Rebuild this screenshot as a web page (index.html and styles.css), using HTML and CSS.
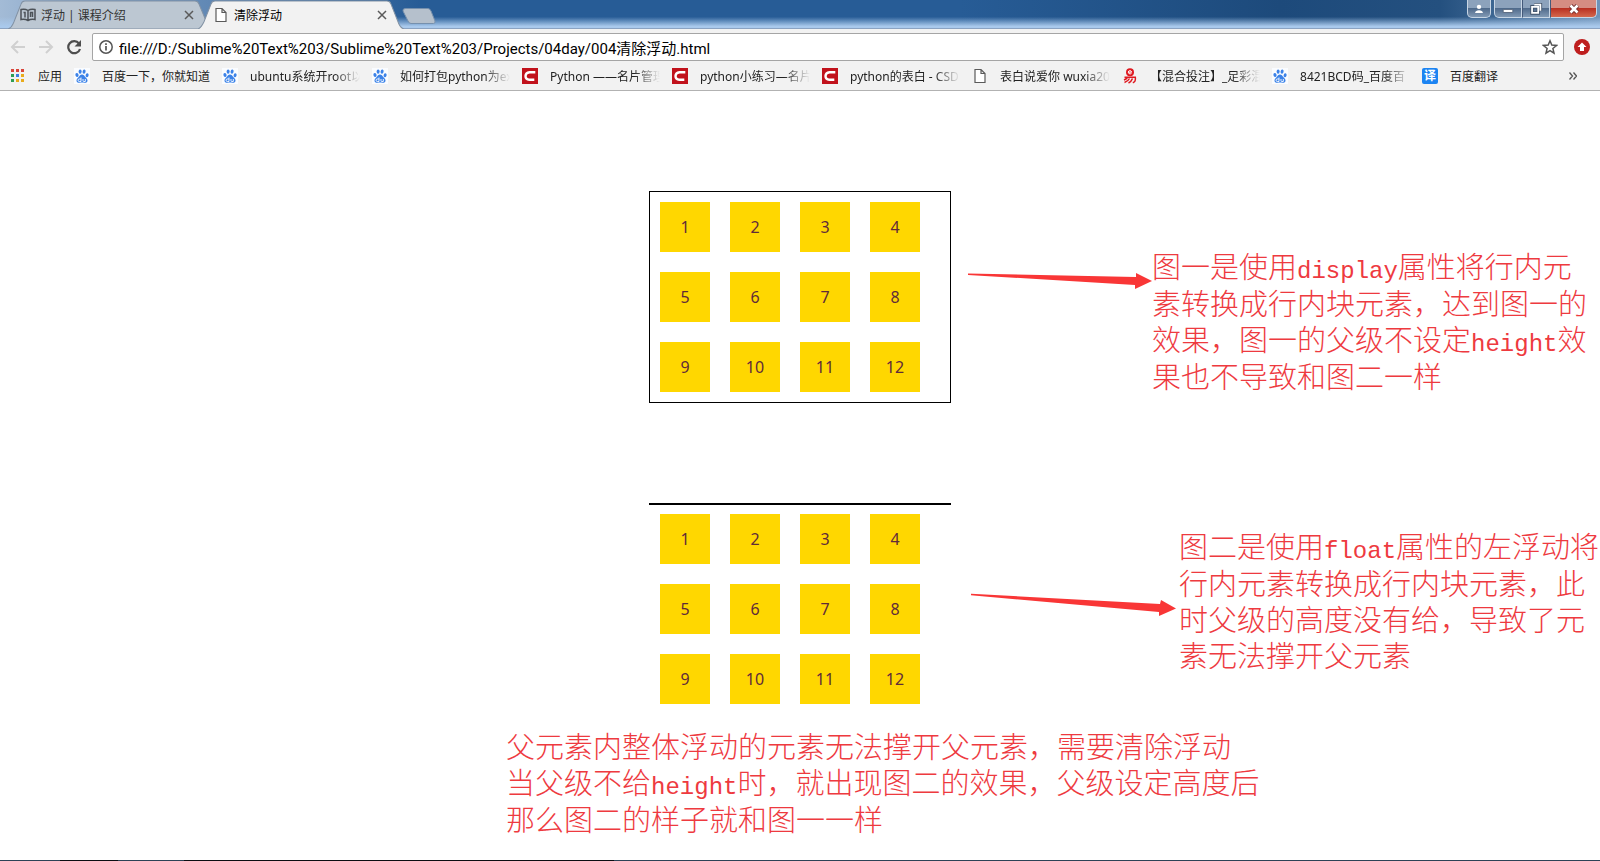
FILE: index.html
```
<!DOCTYPE html>
<html lang="zh-CN">
<head>
<meta charset="utf-8">
<title>清除浮动</title>
<link rel="stylesheet" href="styles.css">
</head>
<body>
<svg class="defs" aria-hidden="true">
  <symbol id="paw" viewBox="0 0 16 16">
    <rect width="16" height="16" fill="#fafcff"/>
    <g fill="#3b82e8">
      <ellipse cx="3" cy="7" rx="1.6" ry="2.1" transform="rotate(-12 3 7)"/>
      <ellipse cx="6.1" cy="3.6" rx="1.5" ry="2.2"/>
      <ellipse cx="10.1" cy="3.6" rx="1.5" ry="2.2" transform="rotate(10 10.1 3.6)"/>
      <ellipse cx="13.1" cy="7.2" rx="1.5" ry="2" transform="rotate(12 13.1 7.2)"/>
      <path d="M8 6.600c1.700 0 2.300 1.200 3.200 2.300 1.200 1.200 2.500 2 2.300 3.900-.2 1.700-1.500 2.200-3 2-1.600-.3-3.400-.3-5 0-1.500.2-2.800-.4-3-2-.2-1.900 1.100-2.700 2.300-3.900C5.700 7.800 6.300 6.600 8 6.600z"/>
    </g>
    <path d="M7 9.500v4H5.300a1.200 1.200 0 0 1 0-2.500H7M9 11v1.700q0 .8.800.8h1.500V11" fill="none" stroke="#fff" stroke-width=".9"/>
  </symbol>
  <symbol id="csdn" viewBox="0 0 16 16">
    <rect width="16" height="16" fill="#c1121c"/>
    <path d="M13.300 4.200H7.500Q3.700 4.600 3.500 8q0 3.500 3.800 3.700h5" fill="none" stroke="#fff" stroke-width="2.400"/>
  </symbol>
  <symbol id="doc" viewBox="0 0 16 16">
    <path d="M3 1.500h6l4 4v9H3zM9 1.500v4h4" fill="#fff" stroke="#5a5a5a" stroke-width="1.200"/>
  </symbol>
</svg>

<header class="browser">
  <div class="titlebar">
    <nav class="tabs">
      <div class="tab">
        <svg class="tab-shape" viewBox="0 0 198 28" preserveAspectRatio="none"><path d="M0 28C4 27 4 25 6 21L13 4Q14 1 17 1H187Q190 1 191 4L198 20V28z" fill="#bcc7d2" stroke="#8292a4"/></svg>
        <svg class="icon" viewBox="0 0 16 16"><path d="M8 3.500Q5 1.500 1 2.500v10q4-.8 7 1 3-1.800 7-1v-10Q11 1.500 8 3.500zV13M3.500 5.500H5v5M10.500 10V5.500h2V10" fill="none" stroke="#4c5258" stroke-width="1.500"/></svg>
        <span class="tab-title">浮动 | 课程介绍</span>
        <button class="close" aria-label="关闭标签页"><svg viewBox="0 0 8 8"><path d="M0 0 8 8M8 0 0 8"/></svg></button>
      </div>
      <div class="tab active">
        <svg class="tab-shape" viewBox="0 0 206 28" preserveAspectRatio="none"><path d="M0 28C3 27 4 25 6 21L13 4Q14 1 17 1H189Q192 1 193 4L200 21Q202 27 206 28" fill="#f2f2f2" stroke="#8292a4"/></svg>
        <svg class="icon"><use href="#doc"/></svg>
        <span class="tab-title">清除浮动</span>
        <button class="close" aria-label="关闭标签页"><svg viewBox="0 0 8 8"><path d="M0 0 8 8M8 0 0 8"/></svg></button>
      </div>
      <button class="new-tab" aria-label="新标签页"><svg viewBox="0 0 34 16"><path d="M3.500.5H26Q28 .5 29 3L33 13Q33.500 15.500 31.500 15.500H9Q7 15.500 6 13L1 3Q.5.500 3.500.500z" fill="#b5c0cc" stroke="#7690ad"/></svg></button>
    </nav>
    <div class="window-buttons">
      <button class="win user" aria-label="用户"><svg viewBox="0 0 16 16"><path d="M8 3a2.500 2.500 0 1 1 0 5 2.500 2.500 0 0 1 0-5zM3.500 12.500q.5-3 4.500-3t4.500 3z" fill="#fff"/></svg></button>
      <div class="win-group">
        <button class="win" aria-label="最小化"><svg viewBox="0 0 16 16"><path d="M2.500 8.500h11v3.500h-11z" fill="#fff" stroke="#53647a"/></svg></button>
        <button class="win" aria-label="还原"><svg viewBox="0 0 16 16"><path d="M6 3h7v7M3.500 5.500h7v7h-7z" fill="none" stroke="#42536a" stroke-width="4"/><path d="M6 3h7v7M3.500 5.500h7v7h-7z" fill="none" stroke="#fff" stroke-width="2"/></svg></button>
        <button class="win shut" aria-label="关闭"><svg viewBox="0 0 16 16"><path d="M4 4l8 8M12 4l-8 8" stroke="#6d2b2b" stroke-width="5"/><path d="M4 4l8 8M12 4l-8 8" stroke="#fff" stroke-width="3"/></svg></button>
      </div>
    </div>
  </div>

  <div class="toolbar">
    <button class="tool" aria-label="后退"><svg viewBox="0 0 16 16"><path d="M15 8H2M8 2 2 8l6 6" fill="none" stroke="#d0d0d0" stroke-width="2"/></svg></button>
    <button class="tool" aria-label="前进"><svg viewBox="0 0 16 16"><path d="M1 8h13M8 2l6 6-6 6" fill="none" stroke="#d0d0d0" stroke-width="2"/></svg></button>
    <button class="tool" aria-label="重新加载"><svg viewBox="0 0 16 16"><path d="M13 4.500A6 6 0 1 0 14 10" fill="none" stroke="#4e4e4e" stroke-width="2.200"/><path d="M15 1v6.500H8.500z" fill="#4e4e4e"/></svg></button>
    <div class="omnibox">
      <svg class="info" viewBox="0 0 16 16"><circle cx="8" cy="8" r="6.200" fill="none" stroke="#555" stroke-width="1.500"/><path d="M8 7v4.500M8 4.300V6" stroke="#555" stroke-width="1.700"/></svg>
      <input class="url" type="text" aria-label="地址" value="file:///D:/Sublime%20Text%203/Sublime%20Text%203/Projects/04day/004清除浮动.html">
      <button class="tool" aria-label="收藏"><svg viewBox="0 0 16 16"><path d="M8 1.800l1.800 4.300 4.700.4-3.600 3 1.100 4.600L8 11.700 4 14.100l1.100-4.600-3.600-3 4.700-.4z" fill="none" stroke="#555" stroke-width="1.500"/></svg></button>
    </div>
    <button class="tool" aria-label="更新"><svg viewBox="0 0 16 16"><circle cx="8" cy="8" r="8" fill="#be1e1e"/><path d="M8 3.500 12.500 8H10v4H6V8H3.500z" fill="#fff"/></svg></button>
  </div>

  <nav class="bookmarks">
    <a class="bookmark" href="#"><svg class="icon" viewBox="0 0 16 16"><path d="M1 1h3v3H1zM6 1h3v3H6zM11 1h3v3h-3z" fill="#d9453a"/><path d="M1 6h3v3H1zM1 11h3v3H1z" fill="#2f9e54"/><path d="M6 6h3v3H6z" fill="#3f7fe0"/><path d="M11 6h3v3h-3zM6 11h3v3H6zM11 11h3v3h-3z" fill="#e9ab1b"/></svg><span>应用</span></a>
    <a class="bookmark" href="#"><svg class="icon"><use href="#paw"/></svg><span>百度一下，你就知道</span></a>
    <a class="bookmark long" href="#"><svg class="icon"><use href="#paw"/></svg><span>ubuntu系统开root以</span></a>
    <a class="bookmark long" href="#"><svg class="icon"><use href="#paw"/></svg><span>如何打包python为ex</span></a>
    <a class="bookmark long" href="#"><svg class="icon"><use href="#csdn"/></svg><span>Python ——名片管理</span></a>
    <a class="bookmark long" href="#"><svg class="icon"><use href="#csdn"/></svg><span>python小练习—名片</span></a>
    <a class="bookmark long" href="#"><svg class="icon"><use href="#csdn"/></svg><span>python的表白 - CSD</span></a>
    <a class="bookmark long" href="#"><svg class="icon"><use href="#doc"/></svg><span>表白说爱你 wuxia20</span></a>
    <a class="bookmark long" href="#"><svg class="icon" viewBox="0 0 16 16"><circle cx="8" cy="4.200" r="4" fill="#df1920"/><path d="M6.300 4.200h3.300q-.2-1.600-1.700-1.600T6.300 4.200q.2 1.700 1.700 1.700 1 0 1.500-.6" fill="none" stroke="#fff"/><path d="M2.500 9.200h10.800q.8 4.600-2.500 5.600M5.800 9q-1.300 2-3.800 3M7.500 10.500q-1.500 2.800-5 4M10.500 10.500q-1 2.800-4 4.500" fill="none" stroke="#df1920" stroke-width="1.500"/></svg><span>【混合投注】_足彩混</span></a>
    <a class="bookmark long" href="#"><svg class="icon"><use href="#paw"/></svg><span>8421BCD码_百度百</span></a>
    <a class="bookmark" href="#"><b class="icon translate">译</b><span>百度翻译</span></a>
    <button class="more" aria-label="更多书签"><svg viewBox="0 0 8 8"><path d="M.5.500 3.500 4l-3 3.500M4.500.500 7.500 4l-3 3.500" fill="none" stroke="#555" stroke-width="1.300"/></svg></button>
  </nav>
</header>

<main class="page">
  <section class="figure first">
    <div class="demo">
      <div class="box inline">
        <span>1</span><span>2</span><span>3</span><span>4</span><span>5</span><span>6</span><span>7</span><span>8</span><span>9</span><span>10</span><span>11</span><span>12</span>
      </div>
    </div>
    <div class="side">
      <svg class="arrow" viewBox="0 0 184 20"><path d="M0 2.500 168 6V2L184 10 167 18V14L0 4z"/></svg>
      <p class="note">图一是使用<code>display</code>属性将行内元<br>素转换成行内块元素，达到图一的<br>效果，图一的父级不设定<code>height</code>效<br>果也不导致和图二一样</p>
    </div>
  </section>

  <section class="figure second">
    <div class="demo">
      <div class="box floated">
        <span>1</span><span>2</span><span>3</span><span>4</span><span>5</span><span>6</span><span>7</span><span>8</span><span>9</span><span>10</span><span>11</span><span>12</span>
      </div>
    </div>
    <div class="side">
      <svg class="arrow" viewBox="0 0 206 24"><path d="M0 .7 189 11 190 7 205 15.500 188 23V19L0 2.200z"/></svg>
      <p class="note">图二是使用<code>float</code>属性的左浮动将<br>行内元素转换成行内块元素，此<br>时父级的高度没有给，导致了元<br>素无法撑开父元素</p>
    </div>
  </section>

  <p class="note summary">父元素内整体浮动的元素无法撑开父元素，需要清除浮动<br>当父级不给<code>height</code>时，就出现图二的效果，父级设定高度后<br>那么图二的样子就和图一一样</p>
</main>
<footer class="taskbar-edge"></footer>
</body>
</html>
```
FILE: styles.css
```
* { box-sizing: border-box; }

body {
  margin: 0;
  min-height: 100vh;
  display: flex;
  flex-direction: column;
  background: #fff;
  font-family: "Noto Sans", "Noto Sans CJK SC", sans-serif;
  color: #000;
}

button {
  padding: 0;
  border: 0;
  background: none;
  font: inherit;
}

svg { display: block; }

.defs {
  position: absolute;
  width: 0;
  height: 0;
}

.icon {
  flex: none;
  width: 16px;
  height: 16px;
}

/* title bar and tabs */
.titlebar {
  display: flex;
  justify-content: space-between;
  align-items: flex-start;
  height: 29px;
  padding: 0 3px 0 8px;
  border-bottom: 1px solid #8ba3c2;
  background:
    linear-gradient(to bottom, transparent 60%, #a9c9ec 94%),
    linear-gradient(to right, #a3bbd6 0, #7f9fc4 100px, #275c96 420px, #275c96 60%, #1d4a7b 80%, #24507f 90%, #6f93b8 100%);
}

.tabs {
  display: flex;
  align-items: flex-start;
  font-size: 12px;
}

.tab {
  position: relative;
  display: flex;
  align-items: center;
  gap: 5px;
  width: 198px;
  height: 29px;
  padding: 0 13px 0 12px;
  color: #333;
}

.tab.active {
  width: 206px;
  margin-left: -8px;
  padding: 0 18px 0 15px;
  color: #000;
}

.tab-shape {
  position: absolute;
  inset: 0;
  width: 100%;
  height: 100%;
}

.tab .icon,
.tab-title,
.close { position: relative; }

.tab-title {
  flex: 1;
  white-space: nowrap;
}

.close svg {
  width: 8px;
  height: 8px;
  overflow: visible;
  stroke: #5a5a5a;
  stroke-width: 1.5;
}

.new-tab { margin: 8px 0 0 -2px; }

.new-tab svg {
  width: 34px;
  height: 16px;
}

.window-buttons {
  display: flex;
  gap: 3px;
}

.win-group { display: flex; }

.win {
  display: grid;
  place-items: center;
  width: 28px;
  height: 18px;
  border: 1px solid #c8d6e5;
  border-top: 0;
  border-left-color: #43597a;
  background: linear-gradient(#8ca2bc 45%, #506b8c 50%, #8199b4);
}

.win svg {
  width: 14px;
  height: 14px;
}

.win.user {
  width: 24px;
  border-color: #c8d6e5;
  border-radius: 0 0 5px 5px;
}

.win-group .win:first-child {
  border-left-color: #c8d6e5;
  border-radius: 0 0 0 5px;
}

.win.shut {
  width: 47px;
  border-radius: 0 0 5px 0;
  background: linear-gradient(#d58d82 45%, #b93122 50%, #d4684d);
}

/* toolbar */
.toolbar {
  display: flex;
  align-items: center;
  gap: 12px;
  padding: 4px 10px 0;
  background: #f2f2f2;
}

.tool svg {
  width: 16px;
  height: 16px;
}

.omnibox {
  flex: 1;
  display: flex;
  align-items: center;
  gap: 5px;
  height: 28px;
  margin-left: -2px;
  margin-right: -2px;
  padding: 0 5px;
  border: 1px solid #a5a5a5;
  border-radius: 2px;
  background: #fff;
}

.info {
  width: 16px;
  height: 16px;
}

.url {
  flex: 1;
  min-width: 0;
  height: 24px;
  padding: 0;
  border: 0;
  outline: 0;
  background: none;
  font: 15px Roboto, "Noto Sans CJK SC", sans-serif;
  color: #000;
}

/* bookmarks */
.bookmarks {
  display: flex;
  align-items: center;
  gap: 12px;
  height: 30px;
  padding: 0 23px 0 10px;
  border-bottom: 1px solid #b2b2b2;
  background: #f2f2f2;
  font-size: 12px;
}

.bookmark {
  display: flex;
  align-items: center;
  gap: 12px;
  color: #222;
  text-decoration: none;
  white-space: nowrap;
}

.bookmark.long span {
  width: 110px;
  overflow: hidden;
  mask-image: linear-gradient(to right, #000 84px, transparent 110px);
}

.translate {
  border-radius: 2px;
  background: #1c84f2;
  color: #fff;
  font-size: 12px;
  line-height: 16px;
  text-align: center;
}

.more { margin-left: auto; }

.more svg {
  width: 8px;
  height: 8px;
}

/* page */
.page {
  flex: 1;
  padding-top: 100px;
}

.figure {
  display: grid;
  grid-template-columns: minmax(0, 1fr) 302px minmax(0, 1fr);
  margin-bottom: 100px;
}

.figure.second { margin-bottom: 13px; }

.demo { grid-column: 2; }

.box {
  width: 302px;
  border: 1px solid #000;
  font-size: 16px;
}

.box.inline { font-size: 0; }

.box span {
  width: 50px;
  height: 50px;
  margin: 10px;
  background: #ffd700;
  color: #5f2b3a;
  font-size: 16px;
  line-height: 50px;
  text-align: center;
}

.inline span {
  display: inline-block;
  vertical-align: top;
}

.floated span { float: left; }

.side {
  display: flex;
  align-items: flex-start;
}

.first .side { padding: 56px 0 0 17px; }

.second .side { padding: 24px 0 0 20px; }

.arrow {
  flex: none;
  fill: #f93636;
}

.first .arrow {
  width: 184px;
  height: 20px;
  margin-top: 24px;
}

.second .arrow {
  width: 206px;
  height: 24px;
  margin: 66px 2px 0 0;
}

.note {
  margin: 0;
  font-family: "Noto Sans CJK SC", sans-serif;
  font-size: 29px;
  font-weight: 300;
  line-height: 36px;
  color: #ee3a3f;
  white-space: nowrap;
}

.note code {
  font-family: "Liberation Mono", monospace;
  font-size: 24px;
  line-height: 24px;
}

.summary { padding-left: calc(50% - 294px); }

.taskbar-edge {
  height: 1px;
  background: linear-gradient(to right, #2c4256 60px, #0b0d12 60px 118px, #2c4256 118px 184px, #0b0d12 184px 614px, #2c4256 614px);
}
```
